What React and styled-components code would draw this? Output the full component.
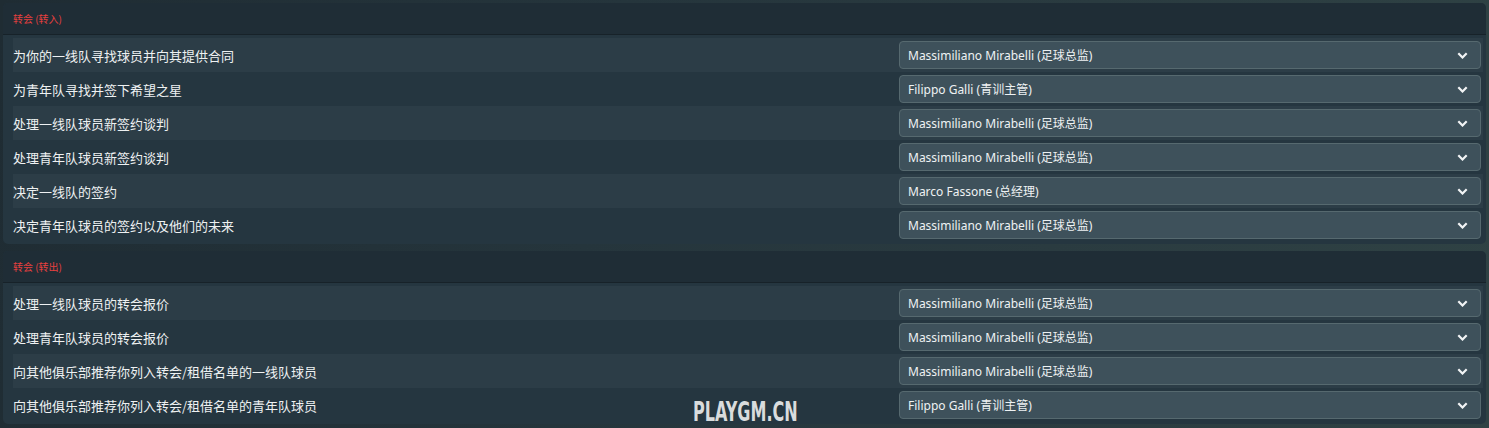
import styled, { createGlobalStyle } from "styled-components";

const GlobalStyle = createGlobalStyle`
    html, body {
        margin: 0;
        padding: 0;
        height: 100%;
        background: linear-gradient(100deg, #1f2c33 0%, #25353c 40%, #2a3b40 70%, #2f4244 100%);
        font-family: "Noto Sans CJK SC", "Noto Sans", sans-serif;
        overflow: hidden;
    }
`;

const Page = styled.div`
    box-sizing: border-box;
    display: flex;
    flex-direction: column;
    gap: 7px;
    height: 428px;
    padding: 3px 3px 0 3px;
    position: relative;
    width: 1489px;
`;

const Panel = styled.section`
    background: #253640;
    border-radius: 5px;
    display: flex;
    flex-direction: column;
    flex-shrink: 0;
`;

const PanelHeader = styled.div`
    align-items: center;
    background: #1f2d36;
    border-bottom: 1px solid #172229;
    border-radius: 5px 5px 0 0;
    box-sizing: border-box;
    color: #e8403f;
    display: flex;
    font-size: 10px;
    height: 32px;
    padding-left: 10px;
`;

const PanelBody = styled.div`
    display: flex;
    flex-direction: column;
    padding: 3px 3px 2px 10px;
`;

const Row = styled.div`
    align-items: center;
    background: ${(p) => (p.$striped ? "#2c3d47" : "transparent")};
    box-sizing: border-box;
    display: grid;
    grid-template-columns: 1fr 582px;
    height: 34px;
    padding-right: 2px;
`;

const Label = styled.span`
    color: #eef1f2;
    font-size: 13px;
`;

const Select = styled.div`
    align-items: center;
    background: #3e515b;
    border: 1px solid #56696f;
    border-radius: 4px;
    box-sizing: border-box;
    color: #eef2f3;
    display: flex;
    font-family: "Noto Sans", "Noto Sans CJK SC", sans-serif;
    font-size: 12px;
    height: 28px;
    justify-content: space-between;
    padding: 0 12px 0 8px;
`;

const Watermark = styled.div`
    bottom: 0;
    color: #d9dcdd;
    font-family: "DejaVu Sans Condensed", "DejaVu Sans", sans-serif;
    font-size: 27px;
    font-weight: bold;
    left: 693px;
    line-height: 1.2;
    position: absolute;
    transform: scaleX(0.66);
    transform-origin: left;
`;

const Chevron = () => (
    <svg width="11" height="7" viewBox="0 0 11 7">
        <polyline points="1.3,1.3 5.5,5.5 9.7,1.3" fill="none" stroke="#f2f4f5" strokeWidth="2.2" />
    </svg>
);

const MM = "Massimiliano Mirabelli (足球总监)";
const FG = "Filippo Galli (青训主管)";

const sections = [
    {
        title: "转会 (转入)",
        rows: [
            ["为你的一线队寻找球员并向其提供合同", MM],
            ["为青年队寻找并签下希望之星", FG],
            ["处理一线队球员新签约谈判", MM],
            ["处理青年队球员新签约谈判", MM],
            ["决定一线队的签约", "Marco Fassone (总经理)"],
            ["决定青年队球员的签约以及他们的未来", MM],
        ],
    },
    {
        title: "转会 (转出)",
        rows: [
            ["处理一线队球员的转会报价", MM],
            ["处理青年队球员的转会报价", MM],
            ["向其他俱乐部推荐你列入转会/租借名单的一线队球员", MM],
            ["向其他俱乐部推荐你列入转会/租借名单的青年队球员", FG],
        ],
    },
];

const App = () => {
    return (
        <>
            <GlobalStyle />
            <Page>
                {sections.map((s) => (
                    <Panel key={s.title}>
                        <PanelHeader>{s.title}</PanelHeader>
                        <PanelBody>
                            {s.rows.map(([label, value], i) => (
                                <Row key={label} $striped={i % 2 === 0}>
                                    <Label>{label}</Label>
                                    <Select>
                                        <span>{value}</span>
                                        <Chevron />
                                    </Select>
                                </Row>
                            ))}
                        </PanelBody>
                    </Panel>
                ))}
                <Watermark>PLAYGM.CN</Watermark>
            </Page>
        </>
    );
};

export default App;
